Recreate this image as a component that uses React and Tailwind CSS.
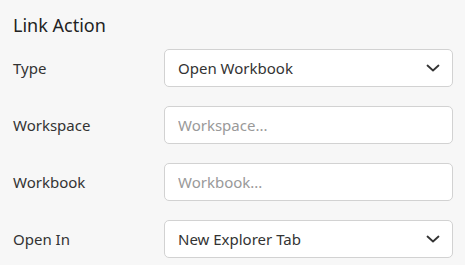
import { useState } from "react";

function Chevron() {
  return (
    <svg width="14" height="8" viewBox="0 0 14 8" className="absolute right-[13px] top-1/2 -translate-y-1/2 pointer-events-none">
      <path d="M1.5 1.5 L7 6.5 L12.5 1.5" fill="none" stroke="#333" strokeWidth="1.8" strokeLinecap="round" strokeLinejoin="round" />
    </svg>
  );
}

function Row({ label, children }) {
  return (
    <div className="flex items-center h-[38px]">
      <label className="w-[151px] text-[15px] text-[#333]">{label}</label>
      <div className="relative w-[289px]">{children}</div>
    </div>
  );
}

export default function App() {
  const [type, setType] = useState("Open Workbook");
  const [workspace, setWorkspace] = useState("");
  const [workbook, setWorkbook] = useState("");
  const [openIn, setOpenIn] = useState("New Explorer Tab");

  const field =
    "w-full h-[38px] px-[13px] bg-white border border-[#d2d2d2] rounded-[5px] text-[15px] text-[#333] outline-none placeholder:text-[#999]";

  return (
    <div className="w-[465px] h-[265px] bg-[#f7f7f7] pl-[13px] pt-[11px]" style={{ fontFamily: '"Noto Sans", sans-serif' }}>
      <h2 className="text-[18px] text-[#222] leading-[28px] mb-[10px]">Link Action</h2>
      <div className="flex flex-col gap-[19px]">
        <Row label="Type">
          <select className={field + " appearance-none"} value={type} onChange={(e) => setType(e.target.value)}>
            <option>Open Workbook</option>
            <option>Open URL</option>
          </select>
          <Chevron />
        </Row>
        <Row label="Workspace">
          <input className={field} placeholder="Workspace..." value={workspace} onChange={(e) => setWorkspace(e.target.value)} />
        </Row>
        <Row label="Workbook">
          <input className={field} placeholder="Workbook..." value={workbook} onChange={(e) => setWorkbook(e.target.value)} />
        </Row>
        <Row label="Open In">
          <select className={field + " appearance-none"} value={openIn} onChange={(e) => setOpenIn(e.target.value)}>
            <option>New Explorer Tab</option>
            <option>Current Tab</option>
          </select>
          <Chevron />
        </Row>
      </div>
    </div>
  );
}
